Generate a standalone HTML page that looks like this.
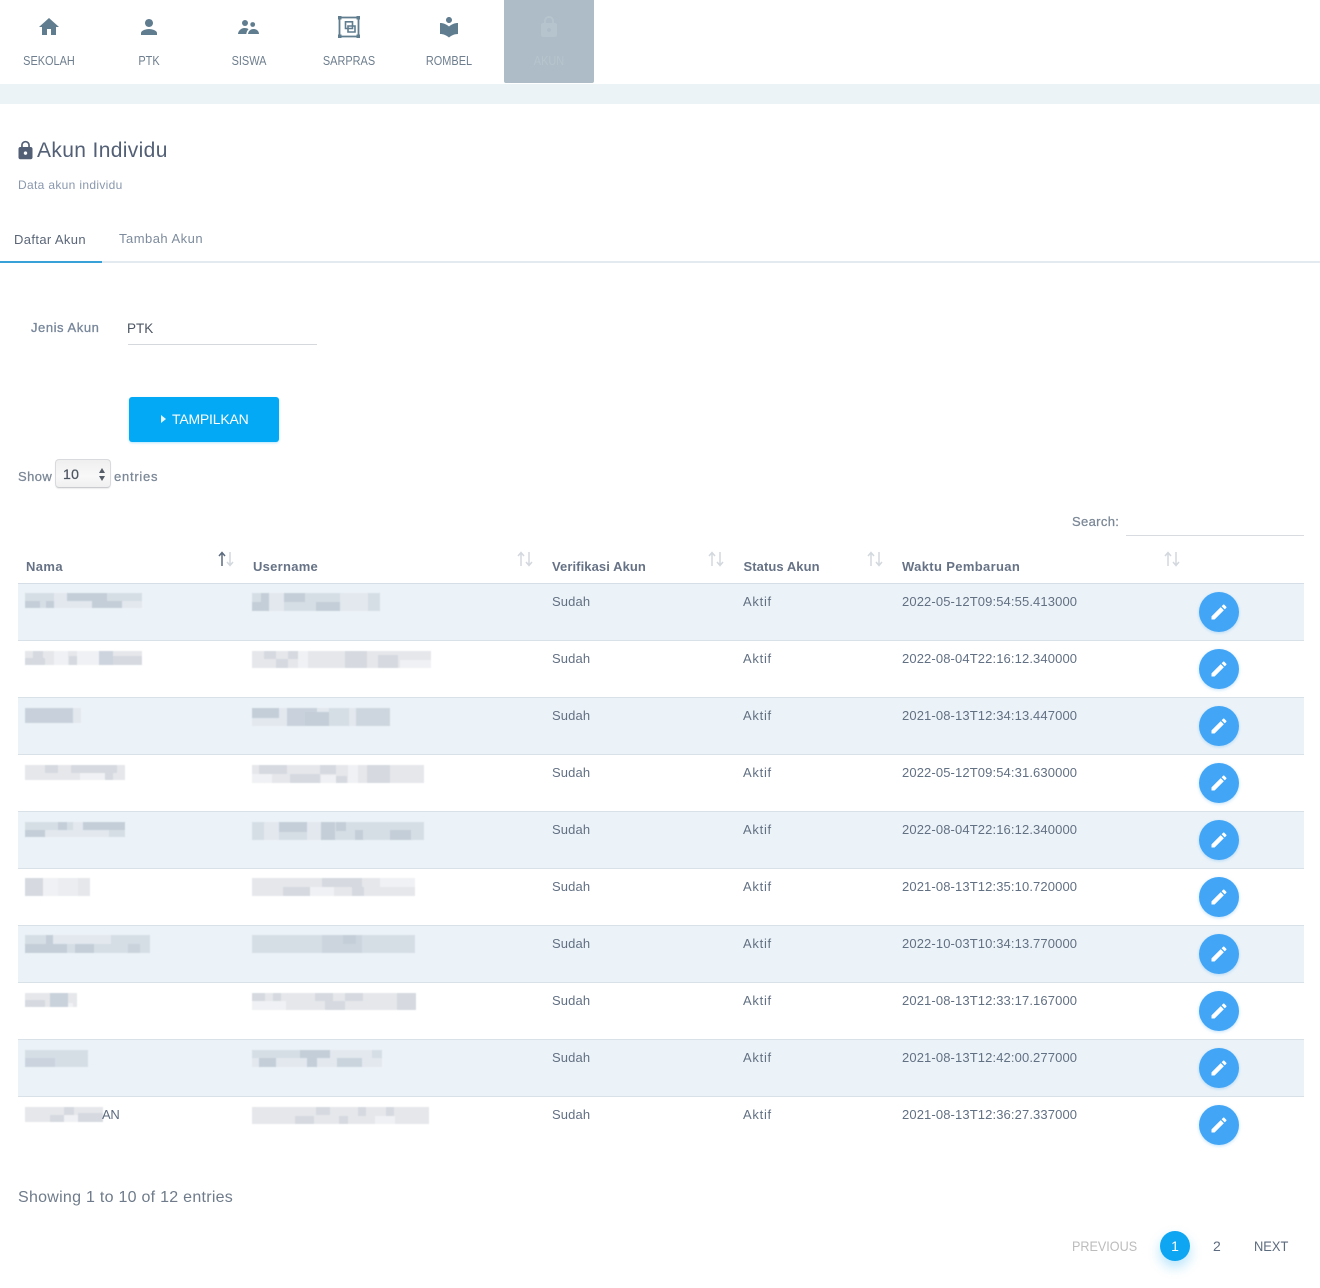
<!DOCTYPE html>
<html lang="id">
<head>
<meta charset="utf-8">
<title>Akun Individu</title>
<style>
html,body{margin:0;padding:0;background:#fff}
body{position:relative;width:1320px;height:1288px;overflow:hidden;font-family:"Liberation Sans",Arial,sans-serif;color:#5d6b7e}
.t{position:absolute;white-space:nowrap;line-height:16px;font-size:13px}
.nav{color:#6e7e8e;font-size:12.5px;transform:translateX(-50%) scaleX(.875);top:53px}
.ic{position:absolute;top:15px;width:24px;height:24px;fill:#607d8f}
.row{position:absolute;left:18px;width:1286px;height:56px;border-bottom:1px solid #d9e1e8}
.z{background:#ecf3f8}
.th{font-weight:bold;color:#667285;top:559px;letter-spacing:.15px}
.c{color:#627083;letter-spacing:.12px}
.k{letter-spacing:.72px}
.btn{position:absolute;left:1199px;width:40px;height:40px;border-radius:50%;background:#42a5f5;box-shadow:0 1px 3px rgba(66,165,245,.35)}
.btn svg{position:absolute;left:9.5px;top:9.5px;width:20px;height:20px;fill:#fff}
.sort{position:absolute;top:551px;width:18px;height:16px}
</style>
</head>
<body>

<!-- top nav -->
<div style="position:absolute;left:0;top:84px;width:1320px;height:20px;background:#ecf3f7"></div>
<div style="position:absolute;left:504px;top:0;width:90px;height:83px;background:#adbcc6;border-radius:0 0 2px 2px"></div>

<svg class="ic" style="left:37px" viewBox="0 0 24 24"><path d="M10 20v-6h4v6h5v-8h3L12 3 2 12h3v8z"/></svg>
<svg class="ic" style="left:137px" viewBox="0 0 24 24"><path d="M12 12c2.210 0 4-1.790 4-4s-1.790-4-4-4-4 1.790-4 4 1.790 4 4 4zm0 2c-2.670 0-8 1.340-8 4v2h16v-2c0-2.660-5.330-4-8-4z"/></svg>
<svg class="ic" style="left:237px" viewBox="0 0 24 24"><circle cx="8" cy="8" r="3"/><circle cx="15.700" cy="9.500" r="2.400"/><path d="M1 19c.2-3 3-6 6.500-6 1.500 0 3 .4 4 1.200-1.200 1.100-2 2.900-2.200 4.800zM11 19c.4-2.800 2.400-5 5.500-5 3 0 5.500 2 5.500 5z"/></svg>
<svg class="ic" style="left:337px" viewBox="0 0 24 24">
  <path fill="none" stroke="#607d8f" stroke-width="1.800" d="M2.500 2.500h19v19h-19z"/>
  <path d="M1 1h3.500v3.500H1zM19.500 1H23v3.500h-3.500zM1 19.500h3.500V23H1zM19.500 19.500H23V23h-3.500z"/>
  <path fill="none" stroke="#607d8f" stroke-width="1.600" d="M8.500 6.800h7v6.700h-7zM11 11h7v6h-7z"/>
</svg>
<svg class="ic" style="left:437px" viewBox="0 0 24 24"><path d="M12 11.550C9.640 9.350 6.480 8 3 8v11c3.480 0 6.640 1.350 9 3.550 2.360-2.190 5.520-3.550 9-3.550V8c-3.480 0-6.640 1.350-9 3.550zM12 8c1.660 0 3-1.340 3-3s-1.340-3-3-3-3 1.340-3 3 1.340 3 3 3z"/></svg>
<svg class="ic" style="left:537px;fill:#b6c4cd" viewBox="0 0 24 24"><path d="M18 8h-1V6c0-2.760-2.240-5-5-5S7 3.240 7 6v2H6c-1.100 0-2 .9-2 2v10c0 1.100.9 2 2 2h12c1.100 0 2-.9 2-2V10c0-1.100-.9-2-2-2zm-6 9c-1.100 0-2-.9-2-2s.9-2 2-2 2 .9 2 2-.9 2-2 2zm3.100-9H8.900V6c0-1.710 1.390-3.100 3.100-3.100 1.710 0 3.100 1.390 3.100 3.100v2z"/></svg>

<div class="t nav" style="left:49px">SEKOLAH</div>
<div class="t nav" style="left:149px">PTK</div>
<div class="t nav" style="left:249px">SISWA</div>
<div class="t nav" style="left:349px">SARPRAS</div>
<div class="t nav" style="left:449px">ROMBEL</div>
<div class="t nav" style="left:549px;color:#b6c4cd">AKUN</div>

<!-- heading -->
<svg style="position:absolute;left:14.500px;top:140px;width:21px;height:21px;fill:#525f75" viewBox="0 0 24 24"><path d="M18 8h-1V6c0-2.760-2.240-5-5-5S7 3.240 7 6v2H6c-1.100 0-2 .9-2 2v10c0 1.100.9 2 2 2h12c1.100 0 2-.9 2-2V10c0-1.100-.9-2-2-2zm-6 9c-1.100 0-2-.9-2-2s.9-2 2-2 2 .9 2 2-.9 2-2 2zm3.100-9H8.900V6c0-1.710 1.390-3.100 3.100-3.100 1.710 0 3.100 1.390 3.100 3.100v2z"/></svg>
<div class="t" style="left:37px;top:139px;font-size:21px;line-height:24px;color:#525f75;letter-spacing:.36px">Akun Individu</div>
<div class="t" style="left:18px;top:177px;font-size:12px;color:#8a98ad;letter-spacing:.33px">Data akun individu</div>

<!-- tabs -->
<div class="t" style="left:14px;top:232px;color:#5a6678;letter-spacing:.37px">Daftar Akun</div>
<div class="t" style="left:119px;top:231px;color:#7d8b9c;letter-spacing:.48px">Tambah Akun</div>
<div style="position:absolute;left:0;top:261px;width:1320px;height:2px;background:#e3ebf1"></div>
<div style="position:absolute;left:0;top:261px;width:102px;height:2px;background:#38a1d8"></div>

<!-- form -->
<div class="t" style="left:31px;top:320px;color:#77869a;letter-spacing:.55px;-webkit-text-stroke:.3px #77869a">Jenis Akun</div>
<div class="t" style="left:127px;top:321px;font-size:13.5px;color:#4c5563">PTK</div>
<div style="position:absolute;left:128px;top:344px;width:189px;height:1px;background:#d5d9dd"></div>

<div style="position:absolute;left:129px;top:397px;width:150px;height:45px;background:#03a9f4;border-radius:3px;box-shadow:0 1px 2px rgba(3,169,244,.3)"></div>
<svg style="position:absolute;left:161px;top:415px;width:6px;height:8px;fill:#e8f6fe" viewBox="0 0 6 8"><path d="M0 0l5 4-5 4z"/></svg>
<div class="t" style="left:172px;top:411px;font-size:14px;color:#fff;letter-spacing:-.2px">TAMPILKAN</div>

<!-- length -->
<div class="t" style="left:18px;top:469px;color:#7b8796;letter-spacing:.4px;-webkit-text-stroke:.25px #7b8796">Show</div>
<div style="position:absolute;left:55px;top:459px;width:54px;height:27px;border:1px solid #d8dadd;border-bottom-color:#c9cbce;border-radius:4px;background:linear-gradient(#efefef,#f8f8f8 60%,#f0f0f0);box-shadow:0 1px 1px rgba(0,0,0,.08)"></div>
<div class="t" style="left:63px;top:466px;font-size:14px;color:#4e5662;letter-spacing:.3px;-webkit-text-stroke:.25px #4e5662">10</div>
<svg style="position:absolute;left:98px;top:468px;width:8px;height:13px;fill:#555d68" viewBox="0 0 8 13"><path d="M4 0l3 5H1zM4 13L1 8h6z"/></svg>
<div class="t" style="left:114px;top:469px;color:#7b8796;letter-spacing:.75px;-webkit-text-stroke:.25px #7b8796">entries</div>

<!-- search -->
<div class="t" style="left:1072px;top:514px;color:#7b8796;letter-spacing:.35px;-webkit-text-stroke:.25px #7b8796">Search:</div>
<div style="position:absolute;left:1126px;top:535px;width:178px;height:1px;background:#d8dce0"></div>

<!-- table header -->
<div class="t th" style="left:26px;letter-spacing:.4px">Nama</div>
<div class="t th" style="left:253px;letter-spacing:.27px">Username</div>
<div class="t th" style="left:552px;letter-spacing:.08px">Verifikasi Akun</div>
<div class="t th" style="left:743.500px;letter-spacing:.07px">Status Akun</div>
<div class="t th" style="left:902px;letter-spacing:.35px">Waktu Pembaruan</div>
<div style="position:absolute;left:18px;top:583px;width:1286px;height:1px;background:#d5dee7"></div>

<svg class="sort" style="left:217px" viewBox="0 0 18 16"><path fill="none" stroke="#5d6b7e" stroke-width="1.500" d="M5 15V2M2 5l3-3.500L8 5"/><path fill="none" stroke="#d3d8df" stroke-width="1.500" d="M13 1v13M10 11l3 3.500 3-3.500"/></svg>
<svg class="sort" style="left:516px" viewBox="0 0 18 16"><path fill="none" stroke="#d3d8df" stroke-width="1.500" d="M5 15V2M2 5l3-3.500L8 5M13 1v13M10 11l3 3.500 3-3.500"/></svg>
<svg class="sort" style="left:707px" viewBox="0 0 18 16"><path fill="none" stroke="#d3d8df" stroke-width="1.500" d="M5 15V2M2 5l3-3.500L8 5M13 1v13M10 11l3 3.500 3-3.500"/></svg>
<svg class="sort" style="left:866px" viewBox="0 0 18 16"><path fill="none" stroke="#d3d8df" stroke-width="1.500" d="M5 15V2M2 5l3-3.500L8 5M13 1v13M10 11l3 3.500 3-3.500"/></svg>
<svg class="sort" style="left:1163px" viewBox="0 0 18 16"><path fill="none" stroke="#d3d8df" stroke-width="1.500" d="M5 15V2M2 5l3-3.500L8 5M13 1v13M10 11l3 3.500 3-3.500"/></svg>

<!-- rows -->
<div class="row z" style="top:584px"></div>
<div class="row" style="top:641px"></div>
<div class="row z" style="top:698px"></div>
<div class="row" style="top:755px"></div>
<div class="row z" style="top:812px"></div>
<div class="row" style="top:869px"></div>
<div class="row z" style="top:926px"></div>
<div class="row" style="top:983px"></div>
<div class="row z" style="top:1040px"></div>

<!-- blurred mosaics -->
<svg style="position:absolute;left:0;top:0;filter:blur(.6px)" width="1320" height="1288" viewBox="0 0 1320 1288">
<style>.a{fill:#c4ced8}.b{fill:#d5dde5}.d{fill:#e2e8ee}.e{fill:#d6dae0}.f{fill:#e5e7eb}.g{fill:#eff1f4}</style>
<!-- row 1 -->
<rect class="b" x="25" y="593" width="117" height="15"/><rect class="a" x="25" y="601" width="15" height="7"/><rect class="a" x="46" y="601" width="8" height="7"/><rect class="d" x="54" y="593" width="13" height="15"/><rect class="d" x="67" y="601" width="25" height="7"/><rect class="a" x="92" y="601" width="30" height="7"/><rect class="a" x="67" y="593" width="40" height="8"/><rect class="d" x="122" y="601" width="20" height="7"/>
<rect class="b" x="252" y="593" width="128" height="18"/><rect class="a" x="252" y="602" width="17" height="9"/><rect class="a" x="261" y="593" width="8" height="9"/><rect class="d" x="269" y="593" width="15" height="18"/><rect class="a" x="284" y="593" width="21" height="9"/><rect class="a" x="316" y="602" width="24" height="9"/><rect class="d" x="340" y="593" width="28" height="18"/><rect class="b" x="369" y="593" width="11" height="18"/>
<!-- row 2 -->
<rect class="f" x="25" y="651" width="117" height="14"/><rect class="e" x="25" y="658" width="20" height="7"/><rect class="e" x="33" y="651" width="10" height="7"/><rect class="g" x="54" y="651" width="14" height="14"/><rect class="e" x="69" y="656" width="8" height="9"/><rect class="g" x="77" y="651" width="22" height="14"/><rect class="a" x="99" y="651" width="14" height="14" opacity=".75"/><rect class="e" x="113" y="656" width="29" height="9"/>
<rect class="f" x="252" y="651" width="179" height="17"/><rect class="e" x="264" y="651" width="12" height="8"/><rect class="e" x="276" y="659" width="12" height="9"/><rect class="e" x="288" y="651" width="10" height="8"/><rect class="g" x="298" y="651" width="10" height="17"/><rect class="e" x="345" y="651" width="22" height="17"/><rect class="e" x="378" y="655" width="20" height="13"/><rect class="g" x="400" y="660" width="31" height="8"/>
<!-- row 3 -->
<rect class="b" x="25" y="708" width="56" height="15"/><rect class="a" x="25" y="708" width="48" height="15" opacity=".8"/><rect class="d" x="73" y="708" width="8" height="15"/>
<rect class="d" x="252" y="708" width="138" height="18"/><rect class="a" x="252" y="708" width="27" height="10"/><rect class="a" x="287" y="708" width="30" height="18" opacity=".85"/><rect class="a" x="305" y="712" width="24" height="14"/><rect class="b" x="329" y="708" width="20" height="18"/><rect class="a" x="356" y="708" width="34" height="18" opacity=".7"/>
<!-- row 4 -->
<rect class="f" x="25" y="765" width="100" height="15"/><rect class="e" x="45" y="765" width="13" height="8"/><rect class="e" x="71" y="765" width="46" height="8"/><rect class="e" x="105" y="771" width="8" height="9"/><rect class="g" x="80" y="773" width="25" height="7"/>
<rect class="f" x="252" y="765" width="172" height="18"/><rect class="g" x="252" y="774" width="20" height="9"/><rect class="e" x="259" y="765" width="28" height="9"/><rect class="e" x="290" y="774" width="30" height="9"/><rect class="e" x="320" y="765" width="16" height="9"/><rect class="g" x="321" y="775" width="15" height="8"/><rect class="e" x="336" y="776" width="11" height="7"/><rect class="e" x="367" y="765" width="23" height="18"/><rect class="g" x="348" y="765" width="10" height="18"/>
<!-- row 5 -->
<rect class="b" x="25" y="822" width="100" height="15"/><rect class="a" x="25" y="830" width="20" height="7"/><rect class="a" x="58" y="822" width="9" height="8"/><rect class="d" x="73" y="822" width="10" height="15"/><rect class="a" x="83" y="822" width="42" height="8"/><rect class="d" x="45" y="830" width="64" height="7"/>
<rect class="b" x="252" y="822" width="172" height="18"/><rect class="d" x="264" y="822" width="15" height="18"/><rect class="a" x="279" y="822" width="28" height="10"/><rect class="d" x="307" y="822" width="14" height="18"/><rect class="a" x="321" y="822" width="14" height="18"/><rect class="a" x="336" y="822" width="10" height="9"/><rect class="a" x="355" y="830" width="8" height="10"/><rect class="a" x="390" y="830" width="21" height="10"/>
<!-- row 6 -->
<rect class="f" x="25" y="878" width="65" height="18"/><rect class="e" x="25" y="878" width="18" height="18"/><rect class="g" x="43" y="878" width="15" height="18"/><rect class="g" x="58" y="878" width="20" height="18" opacity=".6"/>
<rect class="f" x="252" y="878" width="163" height="18"/><rect class="e" x="283" y="887" width="27" height="9"/><rect class="g" x="310" y="887" width="24" height="9"/><rect class="e" x="322" y="878" width="40" height="9"/><rect class="e" x="352" y="887" width="12" height="9"/><rect class="g" x="380" y="878" width="35" height="9"/>
<!-- row 7 -->
<rect class="b" x="25" y="935" width="125" height="18"/><rect class="a" x="25" y="944" width="42" height="9"/><rect class="a" x="46" y="935" width="7" height="9"/><rect class="a" x="75" y="944" width="19" height="9"/><rect class="d" x="53" y="935" width="58" height="9"/><rect class="a" x="128" y="944" width="12" height="9" opacity=".7"/>
<rect class="b" x="252" y="935" width="163" height="18"/><rect class="a" x="322" y="935" width="40" height="18" opacity=".55"/><rect class="a" x="343" y="935" width="13" height="9"/>
<!-- row 8 -->
<rect class="f" x="25" y="993" width="52" height="14"/><rect class="e" x="25" y="1000" width="20" height="7"/><rect class="a" x="50" y="993" width="18" height="14" opacity=".85"/><rect class="g" x="68" y="1003" width="5" height="4"/>
<rect class="f" x="252" y="993" width="164" height="17"/><rect class="e" x="252" y="993" width="13" height="8"/><rect class="e" x="273" y="993" width="8" height="8"/><rect class="g" x="252" y="1001" width="34" height="9"/><rect class="e" x="315" y="993" width="18" height="8"/><rect class="e" x="325" y="1001" width="20" height="9"/><rect class="e" x="345" y="993" width="18" height="8"/><rect class="e" x="397" y="993" width="19" height="17"/>
<!-- row 9 -->
<rect class="b" x="25" y="1050" width="63" height="17"/><rect class="a" x="25" y="1058" width="30" height="9" opacity=".6"/>
<rect class="d" x="252" y="1050" width="130" height="17"/><rect class="a" x="259" y="1058" width="17" height="9"/><rect class="b" x="252" y="1050" width="48" height="8"/><rect class="a" x="300" y="1050" width="30" height="8"/><rect class="a" x="307" y="1058" width="10" height="9"/><rect class="a" x="337" y="1058" width="25" height="9" opacity=".8"/><rect class="b" x="372" y="1050" width="10" height="8"/>
<!-- row 10 -->
<rect class="f" x="25" y="1107" width="78" height="15"/><rect class="e" x="50" y="1115" width="14" height="7"/><rect class="e" x="64" y="1107" width="10" height="8"/><rect class="e" x="78" y="1113" width="25" height="9"/><rect class="g" x="64" y="1115" width="14" height="7"/>
<rect class="f" x="252" y="1107" width="177" height="17"/><rect class="e" x="316" y="1107" width="14" height="8"/><rect class="e" x="295" y="1116" width="19" height="8"/><rect class="e" x="339" y="1116" width="9" height="8"/><rect class="e" x="358" y="1107" width="8" height="9"/><rect class="e" x="386" y="1107" width="8" height="9"/><rect class="g" x="375" y="1116" width="20" height="8"/>
</svg>
<div class="t c" style="left:102px;top:1107px;color:#5d6b7e;letter-spacing:-.3px">AN</div>

<!-- cells -->
<div class="t c" style="left:552px;top:594px">Sudah</div><div class="t c k" style="left:743px;top:594px">Aktif</div><div class="t c" style="left:902px;top:594px">2022-05-12T09:54:55.413000</div>
<div class="t c" style="left:552px;top:651px">Sudah</div><div class="t c k" style="left:743px;top:651px">Aktif</div><div class="t c" style="left:902px;top:651px">2022-08-04T22:16:12.340000</div>
<div class="t c" style="left:552px;top:708px">Sudah</div><div class="t c k" style="left:743px;top:708px">Aktif</div><div class="t c" style="left:902px;top:708px">2021-08-13T12:34:13.447000</div>
<div class="t c" style="left:552px;top:765px">Sudah</div><div class="t c k" style="left:743px;top:765px">Aktif</div><div class="t c" style="left:902px;top:765px">2022-05-12T09:54:31.630000</div>
<div class="t c" style="left:552px;top:822px">Sudah</div><div class="t c k" style="left:743px;top:822px">Aktif</div><div class="t c" style="left:902px;top:822px">2022-08-04T22:16:12.340000</div>
<div class="t c" style="left:552px;top:879px">Sudah</div><div class="t c k" style="left:743px;top:879px">Aktif</div><div class="t c" style="left:902px;top:879px">2021-08-13T12:35:10.720000</div>
<div class="t c" style="left:552px;top:936px">Sudah</div><div class="t c k" style="left:743px;top:936px">Aktif</div><div class="t c" style="left:902px;top:936px">2022-10-03T10:34:13.770000</div>
<div class="t c" style="left:552px;top:993px">Sudah</div><div class="t c k" style="left:743px;top:993px">Aktif</div><div class="t c" style="left:902px;top:993px">2021-08-13T12:33:17.167000</div>
<div class="t c" style="left:552px;top:1050px">Sudah</div><div class="t c k" style="left:743px;top:1050px">Aktif</div><div class="t c" style="left:902px;top:1050px">2021-08-13T12:42:00.277000</div>
<div class="t c" style="left:552px;top:1107px">Sudah</div><div class="t c k" style="left:743px;top:1107px">Aktif</div><div class="t c" style="left:902px;top:1107px">2021-08-13T12:36:27.337000</div>

<!-- edit buttons -->
<div class="btn" style="top:592px"><svg viewBox="0 0 24 24"><path d="M3 17.250V21h3.750L17.810 9.940l-3.750-3.750L3 17.250zM20.710 7.040c.39-.39.39-1.020 0-1.410l-2.340-2.340c-.39-.39-1.020-.39-1.410 0l-1.830 1.830 3.750 3.750 1.830-1.830z"/></svg></div>
<div class="btn" style="top:649px"><svg viewBox="0 0 24 24"><path d="M3 17.250V21h3.750L17.810 9.940l-3.750-3.750L3 17.250zM20.710 7.040c.39-.39.39-1.020 0-1.410l-2.340-2.340c-.39-.39-1.020-.39-1.410 0l-1.830 1.830 3.750 3.750 1.830-1.830z"/></svg></div>
<div class="btn" style="top:706px"><svg viewBox="0 0 24 24"><path d="M3 17.250V21h3.750L17.810 9.940l-3.750-3.750L3 17.250zM20.710 7.040c.39-.39.39-1.020 0-1.410l-2.340-2.340c-.39-.39-1.020-.39-1.410 0l-1.830 1.830 3.750 3.750 1.830-1.830z"/></svg></div>
<div class="btn" style="top:763px"><svg viewBox="0 0 24 24"><path d="M3 17.250V21h3.750L17.810 9.940l-3.750-3.750L3 17.250zM20.710 7.040c.39-.39.39-1.020 0-1.410l-2.340-2.340c-.39-.39-1.020-.39-1.410 0l-1.830 1.830 3.750 3.750 1.830-1.830z"/></svg></div>
<div class="btn" style="top:820px"><svg viewBox="0 0 24 24"><path d="M3 17.250V21h3.750L17.810 9.940l-3.750-3.750L3 17.250zM20.710 7.040c.39-.39.39-1.020 0-1.410l-2.340-2.340c-.39-.39-1.020-.39-1.410 0l-1.830 1.830 3.750 3.750 1.830-1.830z"/></svg></div>
<div class="btn" style="top:877px"><svg viewBox="0 0 24 24"><path d="M3 17.250V21h3.750L17.810 9.940l-3.750-3.750L3 17.250zM20.710 7.040c.39-.39.39-1.020 0-1.410l-2.340-2.340c-.39-.39-1.020-.39-1.410 0l-1.830 1.830 3.750 3.750 1.830-1.830z"/></svg></div>
<div class="btn" style="top:934px"><svg viewBox="0 0 24 24"><path d="M3 17.250V21h3.750L17.810 9.940l-3.750-3.750L3 17.250zM20.710 7.040c.39-.39.39-1.020 0-1.410l-2.340-2.340c-.39-.39-1.020-.39-1.410 0l-1.830 1.830 3.750 3.750 1.830-1.830z"/></svg></div>
<div class="btn" style="top:991px"><svg viewBox="0 0 24 24"><path d="M3 17.250V21h3.750L17.810 9.940l-3.750-3.750L3 17.250zM20.710 7.040c.39-.39.39-1.020 0-1.410l-2.340-2.340c-.39-.39-1.020-.39-1.410 0l-1.830 1.830 3.750 3.750 1.830-1.830z"/></svg></div>
<div class="btn" style="top:1048px"><svg viewBox="0 0 24 24"><path d="M3 17.250V21h3.750L17.810 9.940l-3.750-3.750L3 17.250zM20.710 7.040c.39-.39.39-1.020 0-1.410l-2.340-2.340c-.39-.39-1.020-.39-1.410 0l-1.830 1.830 3.750 3.750 1.830-1.830z"/></svg></div>
<div class="btn" style="top:1105px"><svg viewBox="0 0 24 24"><path d="M3 17.250V21h3.750L17.810 9.940l-3.750-3.750L3 17.250zM20.710 7.040c.39-.39.39-1.020 0-1.410l-2.340-2.340c-.39-.39-1.020-.39-1.410 0l-1.830 1.830 3.750 3.750 1.830-1.830z"/></svg></div>

<!-- footer -->
<div class="t" style="left:18px;top:1190px;font-size:16px;color:#6f7b8a;letter-spacing:.27px">Showing 1 to 10 of 12 entries</div>
<div class="t" style="left:1072px;top:1238px;font-size:14px;color:#bcbcbc;transform:scaleX(.9);transform-origin:left">PREVIOUS</div>
<div style="position:absolute;left:1160px;top:1231px;width:30px;height:30px;border-radius:50%;background:#0ea5f2;box-shadow:0 6px 12px rgba(14,165,242,.3)"></div>
<div class="t" style="left:1160px;width:30px;text-align:center;top:1238px;font-size:14px;color:#fff">1</div>
<div class="t" style="left:1213px;top:1238px;font-size:14px;color:#5d6b7e">2</div>
<div class="t" style="left:1254px;top:1238px;font-size:14px;color:#5d6b7e;transform:scaleX(.92);transform-origin:left">NEXT</div>

</body>
</html>
